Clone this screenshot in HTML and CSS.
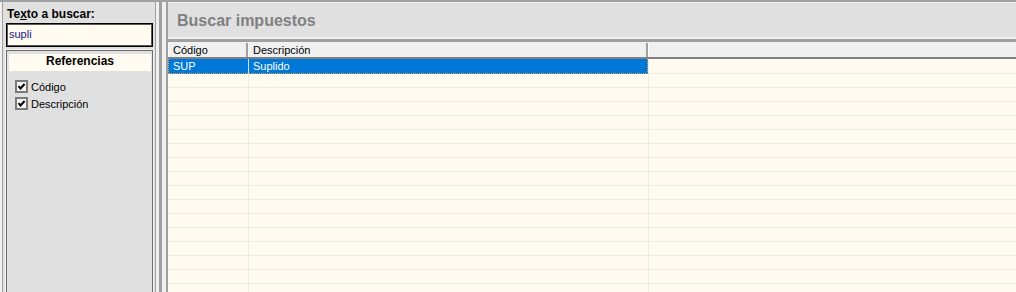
FILE: index.html
```html
<!DOCTYPE html>
<html lang="es">
<head>
    <meta charset="UTF-8">
    <meta name="viewport" content="width=device-width, initial-scale=1.0">
    <title>Buscar impuestos</title>
    <link rel="stylesheet" href="styles.css">
</head>
<body>

<div class="window">
    <aside class="search-panel">
        <label class="search-label" for="searchText">Te<u>x</u>to a buscar:</label>
        <input type="text" id="searchText" class="search-input" value="supli">

        <div class="refs">
            <div class="refs-title">Referencias</div>
            <label class="check">
                <svg class="check-box" width="13" height="13" viewBox="0 0 13 13">
                    <rect x="1" y="1" width="11" height="11" fill="#f4f4f4" stroke="#7a7a7a" stroke-width="2"/>
                    <path d="M3.5 6.2 L5.5 8.4 L9.6 4" fill="none" stroke="#000" stroke-width="2"/>
                </svg>
                Código
            </label>
            <label class="check">
                <svg class="check-box" width="13" height="13" viewBox="0 0 13 13">
                    <rect x="1" y="1" width="11" height="11" fill="#f4f4f4" stroke="#7a7a7a" stroke-width="2"/>
                    <path d="M3.5 6.2 L5.5 8.4 L9.6 4" fill="none" stroke="#000" stroke-width="2"/>
                </svg>
                Descripción
            </label>
        </div>
    </aside>

    <div class="splitter"></div>

    <main class="results">
        <div class="results-title">Buscar impuestos</div>
        <div class="results-sep"></div>

        <div class="grid">
            <div class="grid-head">
                <div>Código</div>
                <div>Descripción</div>
                <div class="cell-fill"></div>
            </div>

            <div class="grid-row selected">
                <div class="cell-code">SUP</div>
                <div class="cell-desc">Suplido</div>
                <div class="cell-fill"></div>
            </div>

            <!-- empty rows -->
            <div class="grid-row"><div class="cell-code"></div><div class="cell-desc"></div><div class="cell-fill"></div></div>
            <div class="grid-row"><div class="cell-code"></div><div class="cell-desc"></div><div class="cell-fill"></div></div>
            <div class="grid-row"><div class="cell-code"></div><div class="cell-desc"></div><div class="cell-fill"></div></div>
            <div class="grid-row"><div class="cell-code"></div><div class="cell-desc"></div><div class="cell-fill"></div></div>
            <div class="grid-row"><div class="cell-code"></div><div class="cell-desc"></div><div class="cell-fill"></div></div>
            <div class="grid-row"><div class="cell-code"></div><div class="cell-desc"></div><div class="cell-fill"></div></div>
            <div class="grid-row"><div class="cell-code"></div><div class="cell-desc"></div><div class="cell-fill"></div></div>
            <div class="grid-row"><div class="cell-code"></div><div class="cell-desc"></div><div class="cell-fill"></div></div>
            <div class="grid-row"><div class="cell-code"></div><div class="cell-desc"></div><div class="cell-fill"></div></div>
            <div class="grid-row"><div class="cell-code"></div><div class="cell-desc"></div><div class="cell-fill"></div></div>
            <div class="grid-row"><div class="cell-code"></div><div class="cell-desc"></div><div class="cell-fill"></div></div>
            <div class="grid-row"><div class="cell-code"></div><div class="cell-desc"></div><div class="cell-fill"></div></div>
            <div class="grid-row"><div class="cell-code"></div><div class="cell-desc"></div><div class="cell-fill"></div></div>
            <div class="grid-row"><div class="cell-code"></div><div class="cell-desc"></div><div class="cell-fill"></div></div>
            <div class="grid-row"><div class="cell-code"></div><div class="cell-desc"></div><div class="cell-fill"></div></div>
            <div class="grid-row"><div class="cell-code"></div><div class="cell-desc"></div><div class="cell-fill"></div></div>
        </div>
    </main>
</div>

</body>
</html>
```

FILE: styles.css
```css
* {
    box-sizing: border-box;
}

html, body {
    margin: 0;
}

body {
    font-family: "Liberation Sans", Arial, sans-serif;
    font-size: 11px;
    color: #000;
    background: #f0f0f0;
    height: 292px;
    overflow: hidden;
    border-top: 2px solid #a0a0a0;
}

.window {
    display: flex;
    height: 290px;
}

/* left search panel */
.search-panel {
    width: 154px;
    margin-left: 2px;
    border-left: 1px solid #a0a0a0;
    border-right: 1px solid #a0a0a0;
    background: #e0e0e0;
    padding: 5px 2px 0 3px;
    display: flex;
    flex-direction: column;
    overflow: hidden;
}
.search-label {
    font-weight: bold;
    font-size: 12px;
    line-height: 14px;
    margin-left: 1px;
}
.search-input {
    margin-top: 2px;
    height: 24px;
    width: 100%;
    flex: none;
    border: 1px solid #000;
    box-shadow: inset 0 0 0 1px #5a5a5a;
    background: #fffbf0;
    font-family: "Liberation Sans", Arial, sans-serif;
    font-size: 11px;
    color: #202088;
    padding: 0 2px 3px;
    outline: none;
}
.refs {
    margin-top: 3px;
    margin-bottom: -4px;
    flex: 1;
    border: 1px solid #6b6b6b;
    box-shadow: 0 0 0 1px #f4f4f4;
    padding: 3px 1px 0 2px;
}
.refs-title {
    background: #fffbf0;
    text-align: center;
    font-weight: bold;
    font-size: 12px;
    line-height: 15px;
    padding-bottom: 2px;
    margin-bottom: 7px;
}
.check {
    display: flex;
    align-items: center;
    gap: 3px;
    height: 17px;
    margin-left: 6px;
}
.check-box {
    flex: none;
}

/* splitter */
.splitter {
    width: 3px;
    margin: 0 4px 0 3px;
    background: #a0a0a0;
}

/* results */
.results {
    flex: 1;
    min-width: 0;
    border-left: 2px solid #a0a0a0;
    display: flex;
    flex-direction: column;
}
.results-title {
    flex: none;
    height: 37px;
    border-top: 1px solid #f0f0f0;
    border-bottom: 2px solid #f0f0f0;
    background: #e0e0e0;
    color: #808080;
    font-weight: bold;
    font-size: 16px;
    line-height: 36px;
    padding-left: 9px;
    overflow: hidden;
}
.results-sep {
    flex: none;
    height: 3px;
    background: #a0a0a0;
}
.grid {
    flex: 1;
    min-height: 0;
    overflow: hidden;
    background: #fffbf0;
    border-top: 1px solid #f0f0f0;
}
.grid-head {
    display: grid;
    grid-template-columns: 80px 400px 1fr;
    height: 16px;
    background: #f0f0f0;
    border-bottom: 2px solid #808080;
}
.grid-head div {
    border-left: 1px solid #fff;
    border-right: 2px solid #a0a0a0;
    padding: 1px 0 0 4px;
    line-height: 13px;
}
.grid-head .cell-fill {
    border-right: none;
}
.grid-row {
    display: grid;
    grid-template-columns: 80px 400px 1fr;
    height: 14px;
    border-bottom: 1px solid #eeebe3;
    line-height: 13px;
}
.grid-row .cell-code {
    padding-left: 5px;
}
.grid-row .cell-desc {
    padding-left: 4px;
    border-left: 1px solid #eeebe3;
}
.grid-row .cell-fill {
    border-left: 1px solid #eeebe3;
}

/* selected row with focus rectangle */
.grid-row.selected {
    height: 15px;
    line-height: 14px;
}
.grid-row.selected .cell-code,
.grid-row.selected .cell-desc {
    background: #0078d7;
    color: #fff;
    border-bottom: 1px dotted #f3a13a;
}
.grid-row.selected .cell-code {
    border-left: 1px dotted #f3a13a;
    padding-left: 4px;
}
.grid-row.selected .cell-desc {
    border-left-color: #cfe0f0;
    border-right: 1px dotted #f3a13a;
}
```
